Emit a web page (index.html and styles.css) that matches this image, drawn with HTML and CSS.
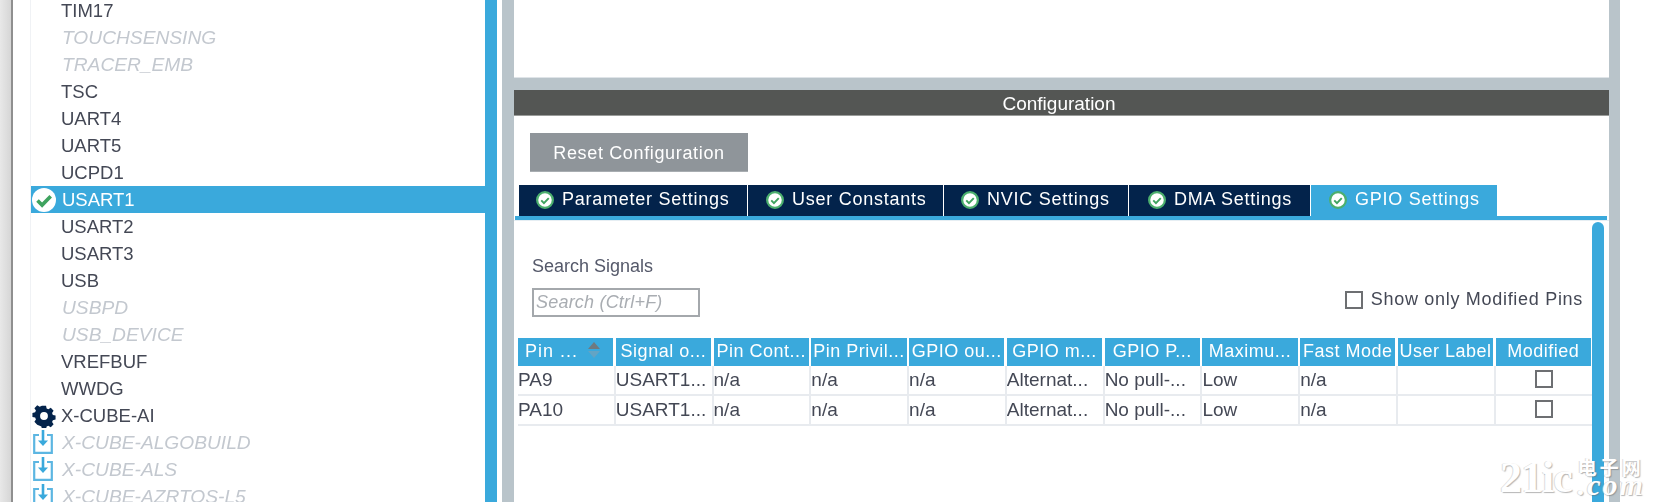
FILE: index.html
```html
<!DOCTYPE html>
<html lang="en">
<head>
<meta charset="utf-8">
<title>Configuration</title>
<link rel="stylesheet" href="styles.css">
</head>
<body>
<svg class="defs" width="0" height="0" aria-hidden="true">
  <symbol id="check" viewBox="0 0 24 24">
    <circle cx="12" cy="12" r="12" fill="#fff"/>
    <path d="M5.5 12.5l4.600 4.600 8.600-8.800" fill="none" stroke="#3fa35f" stroke-width="3.600"/>
  </symbol>
  <symbol id="ring-check" viewBox="0 0 24 24">
    <circle cx="12" cy="12" r="10.500" fill="#fff" stroke="#4caf6e" stroke-width="3"/>
    <path d="M7 12.500l3.600 3.600 6.400-6.600" fill="none" stroke="#3fa35f" stroke-width="2.600"/>
  </symbol>
  <symbol id="download" viewBox="0 0 20 24">
    <path d="M6 5H1.200v17.800h17.600V5H14" fill="none" stroke="#5cb6e2" stroke-width="2.200"/>
    <path d="M10 0v14" stroke="#3aa9dc" stroke-width="2.600"/>
    <path d="M5 10.500l5 5.500 5-5.500z" fill="#3aa9dc"/>
  </symbol>
  <symbol id="gear" viewBox="0 0 24 24">
    <path fill="#03234b" fill-rule="evenodd" d="M9.600 0h4.800l.7 3.300 2 .9 2.900-1.800 3.300 3.400-1.800 2.800.9 2.100 3.200.7v4.800l-3.200.7-.9 2.100 1.800 2.800-3.300 3.400-2.900-1.800-2 .9-.7 3.300H9.600l-.7-3.300-2-.9L4 22.200.7 18.800l1.800-2.800-.9-2.100-3.200-.7V8.400l3.200-.7.9-2.100L.7 2.800 4 -.6l2.900 1.800 2-.9zM12 7.400a4.600 4.600 0 1 0 0 9.200a4.600 4.600 0 1 0 0-9.200z" transform="translate(1.800 1.800) scale(.85)"/>
  </symbol>
</svg>

<div class="app">
  <div class="edge"></div>
  <aside class="sidebar">
    <ul class="list">
      <li class="item">TIM17</li>
      <li class="item off">TOUCHSENSING</li>
      <li class="item off">TRACER_EMB</li>
      <li class="item">TSC</li>
      <li class="item">UART4</li>
      <li class="item">UART5</li>
      <li class="item">UCPD1</li>
      <li class="item selected"><svg class="ico-check"><use href="#check"/></svg>USART1</li>
      <li class="item">USART2</li>
      <li class="item">USART3</li>
      <li class="item">USB</li>
      <li class="item off">USBPD</li>
      <li class="item off">USB_DEVICE</li>
      <li class="item">VREFBUF</li>
      <li class="item">WWDG</li>
      <li class="item"><svg class="ico-gear"><use href="#gear"/></svg>X-CUBE-AI</li>
      <li class="item off"><svg class="ico-dl"><use href="#download"/></svg>X-CUBE-ALGOBUILD</li>
      <li class="item off"><svg class="ico-dl"><use href="#download"/></svg>X-CUBE-ALS</li>
      <li class="item off"><svg class="ico-dl"><use href="#download"/></svg>X-CUBE-AZRTOS-L5</li>
    </ul>
    <div class="side-scroll"></div>
  </aside>
  <div class="divider"></div>
  <main class="main">
    <div class="blank"></div>
    <div class="band"></div>
    <h2 class="title">Configuration</h2>
    <div class="content">
      <button class="reset">Reset Configuration</button>
      <div class="tabs">
        <div class="tab t1"><svg class="tab-check"><use href="#ring-check"/></svg>Parameter Settings</div>
        <div class="tab t2"><svg class="tab-check"><use href="#ring-check"/></svg>User Constants</div>
        <div class="tab t3"><svg class="tab-check"><use href="#ring-check"/></svg>NVIC Settings</div>
        <div class="tab t4"><svg class="tab-check"><use href="#ring-check"/></svg>DMA Settings</div>
        <div class="tab t5 active"><svg class="tab-check"><use href="#ring-check"/></svg>GPIO Settings</div>
      </div>
      <div class="tabline"></div>
      <div class="pane">
        <div class="pane-body">
          <div class="tools">
            <div class="search">
              <label class="search-label">Search Signals</label>
              <div class="search-input">Search (Ctrl+F)</div>
            </div>
            <div class="only"><span class="box"></span>Show only Modified Pins</div>
          </div>
          <div class="table">
            <div class="th th-pin">Pin ...<span class="sort"></span></div>
            <div class="th">Signal o...</div>
            <div class="th">Pin Cont...</div>
            <div class="th">Pin Privil...</div>
            <div class="th">GPIO ou...</div>
            <div class="th">GPIO m...</div>
            <div class="th">GPIO P...</div>
            <div class="th">Maximu...</div>
            <div class="th">Fast Mode</div>
            <div class="th">User Label</div>
            <div class="th">Modified</div>

            <div class="td">PA9</div>
            <div class="td">USART1...</div>
            <div class="td">n/a</div>
            <div class="td">n/a</div>
            <div class="td">n/a</div>
            <div class="td">Alternat...</div>
            <div class="td">No pull-...</div>
            <div class="td">Low</div>
            <div class="td">n/a</div>
            <div class="td"></div>
            <div class="td td-box"><span class="box"></span></div>

            <div class="td">PA10</div>
            <div class="td">USART1...</div>
            <div class="td">n/a</div>
            <div class="td">n/a</div>
            <div class="td">n/a</div>
            <div class="td">Alternat...</div>
            <div class="td">No pull-...</div>
            <div class="td">Low</div>
            <div class="td">n/a</div>
            <div class="td"></div>
            <div class="td td-box"><span class="box"></span></div>
          </div>
        </div>
        <div class="pane-scroll"></div>
      </div>
    </div>
  </main>
  <div class="divider right"></div>
  <div class="gutter"></div>
</div>
<div class="watermark"><span class="wm-big">21ic</span><span class="wm-side"><span class="wm-cn">电子网</span><span class="wm-com">.com</span></span></div>
</body>
</html>
```

FILE: styles.css
```css
* { box-sizing: border-box; }
html, body { margin: 0; padding: 0; height: 502px; overflow: hidden; background: #fff; }
body { font-family: "Liberation Sans", Arial, sans-serif; position: relative; color: #3c4150; }
.defs { position: absolute; }
.app { display: flex; height: 502px; overflow: hidden; filter: blur(.4px); }

.edge { width: 13px; flex: none; background: linear-gradient(90deg, #e8e8e8 0, #d6d6d6 84%, #8f8f8f 86%, #8f8f8f 100%); }
.sidebar { width: 489px; flex: none; display: flex; padding-left: 17px; padding-right: 5px; background: #fff; height: 502px; overflow: hidden; }
.list { list-style: none; margin: -3px 0 0; padding: 0; flex: 1; min-width: 0; border-left: 1px solid #f0f2f5; }
.item { height: 27px; line-height: 27px; font-size: 18.5px; padding-left: 30px; white-space: nowrap; display: flex; align-items: center; position: relative; color: #444855; }
.item.off { color: #c3c8cf; font-style: italic; font-size: 19.2px; padding-left: 31px; }
.item.selected { background: #3aa9dc; color: #fff; padding-left: 31px; margin-right: -1px; }
.ico-check { position: absolute; left: 1px; top: 1.500px; width: 24px; height: 24px; }
.ico-gear { position: absolute; left: 1px; top: 1.500px; width: 24px; height: 24px; }
.ico-dl { position: absolute; left: 2px; top: 1px; width: 20px; height: 24px; }
.side-scroll { width: 12px; flex: none; background: #3aa9dc; }

.divider { width: 12px; flex: none; background: #b9c4ca; }
.divider.right { width: 11px; }
.gutter { flex: 1; background: #fff; }

.main { width: 1095px; flex: none; display: flex; flex-direction: column; background: #fff; }
.blank { height: 78px; flex: none; border-bottom: 1px solid #dfe4e8; }
.band { height: 12px; flex: none; background: #b9c4ca; }
.title { margin: 0; height: 26px; flex: none; background: #545654; color: #fff; font-size: 19px; font-weight: 400; line-height: 27px; text-align: center; border-bottom: 1px solid #9a9c9a; padding-right: 5px; }
.content { flex: 1; min-height: 0; display: flex; flex-direction: column; }
.reset { align-self: flex-start; margin: 17px 0 0 16px; width: 218px; height: 39px; background: #8f959a; border: 0; border-bottom: 1px solid #a8adb1; color: #fff; font: 18px "Liberation Sans", Arial, sans-serif; letter-spacing: .65px; padding: 2px 0 0; }
.tabs { display: flex; gap: 1px; margin: 13px 0 0 5px; height: 31px; flex: none; }
.tab { height: 31px; background: #03234b; color: #fff; font-size: 18px; letter-spacing: .75px; line-height: 31px; display: flex; align-items: center; padding-left: 17px; padding-bottom: 2px; white-space: nowrap; }
.tab.t1 { width: 228px; }
.tab.t2 { width: 195px; padding-left: 18px; }
.tab.t3 { width: 184px; padding-left: 17px; }
.tab.t4 { width: 181px; padding-left: 19px; }
.tab.t5 { width: 186px; padding-left: 18px; height: 35px; background: #3aa9dc; padding-bottom: 6px; }
.tab-check { width: 18px; height: 18px; margin-right: 8px; flex: none; }
.tabline { height: 4px; flex: none; margin: 0 2px 0 1px; background: #3aa9dc; }
.pane { flex: 1; min-height: 0; display: flex; border-top: 1px solid #e6eef3; padding-top: 1px; }
.pane-body { width: 1078px; flex: none; padding: 0 0 0 4px; }
.tools { display: flex; justify-content: space-between; align-items: flex-start; padding: 33px 9px 0 14px; height: 116px; }
.search-label { display: block; font-size: 18px; line-height: 22px; color: #55596a; }
.search-input { margin-top: 11px; width: 168px; height: 29px; border: 2px solid #a4a8ac; font-style: italic; color: #a9adb2; font-size: 18px; line-height: 25px; padding-left: 2px; letter-spacing: .2px; }
.only { display: flex; align-items: center; margin-top: 34px; font-size: 18px; letter-spacing: .7px; color: #444855; }
.only .box { margin-right: 8px; }
.box { display: inline-block; width: 18px; height: 18px; border: 2px solid #6d6f72; background: #fff; flex: none; }

.table { display: grid; grid-template-columns: repeat(11, 1fr); column-gap: 2.500px; width: 1073px; }
.th { height: 28px; background: #3aa9dc; color: #fff; font-size: 18px; line-height: 27px; text-align: center; white-space: nowrap; overflow: hidden; position: relative; letter-spacing: .5px; }
.th-pin { text-align: left; padding-left: 7px; letter-spacing: 1px; }
.sort { position: absolute; left: 70px; top: 4px; width: 12px; height: 16px; }
.sort::before, .sort::after { content: ""; position: absolute; left: 0; border-left: 6px solid transparent; border-right: 6px solid transparent; }
.sort::before { top: 0; border-bottom: 7px solid #6f7a80; }
.sort::after { top: 9px; border-top: 7px solid #63a4c4; }
.td { height: 30px; border-right: 2px solid #e8ebef; border-bottom: 2px solid #e8ebef; margin-right: -2.500px; font-size: 19px; line-height: 28px; padding-left: 0; white-space: nowrap; overflow: hidden; color: #444855; }
.td-box { display: flex; justify-content: center; align-items: center; padding: 0 0 2px; }
.pane-scroll { width: 12px; flex: none; background: #3aa9dc; border-radius: 6px 6px 0 0; }

.watermark { position: absolute; left: 1500px; top: 458px; display: flex; gap: 6px; color: #fff; text-shadow: 1px 1px 1px rgba(110, 110, 110, .5), -1px 0 0 rgba(190, 190, 190, .5); white-space: nowrap; }
.wm-big { font: 700 44px/40px "Liberation Serif", serif; letter-spacing: -1px; }
.wm-side { display: flex; flex-direction: column; }
.wm-cn { font: 700 19px/18px "Noto Sans CJK SC", sans-serif; letter-spacing: 3px; }
.wm-com { font: italic 700 30px/18px "Liberation Serif", serif; letter-spacing: 2px; }
```
